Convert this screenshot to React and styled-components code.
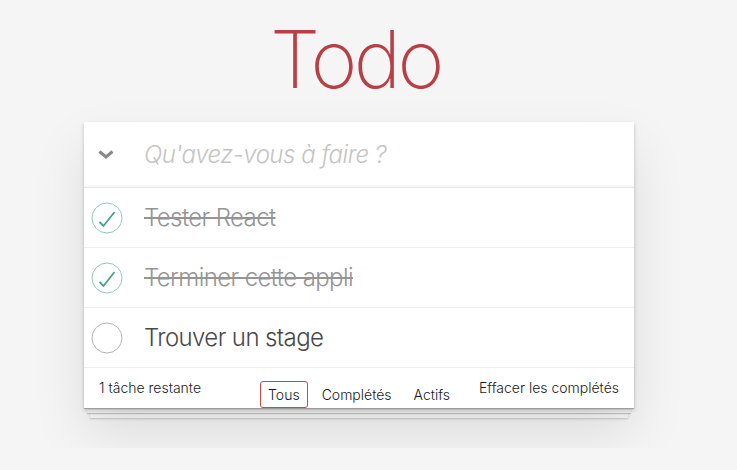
import React from "react";
import styled, { createGlobalStyle } from "styled-components";

const Global = createGlobalStyle`
  html, body { margin: 0; padding: 0; }
  body {
    background: #f5f5f5;
    font-family: Inter, "Helvetica Neue", "Liberation Sans", sans-serif;
    font-weight: 300;
    color: #111;
    -webkit-font-smoothing: antialiased;
  }
`;

const Page = styled.div`
  width: 550px;
  margin-left: 84px;
  padding-top: 19px;
  padding-bottom: 40px;
`;

const Title = styled.h1`
  margin: 0 0 23px;
  font-size: 80px;
  line-height: 80px;
  font-weight: 200;
  text-align: center;
  color: #b83f45;
  letter-spacing: -3.5px;
  text-indent: -7px;
`;

const Card = styled.section`
  background: #fff;
  position: relative;
  box-shadow: 0 2px 4px 0 rgba(0, 0, 0, 0.2), 0 25px 50px 0 rgba(0, 0, 0, 0.1);
`;

const Header = styled.div`
  display: flex;
  align-items: center;
  height: 65px;
  box-shadow: inset 0 -2px 1px rgba(0, 0, 0, 0.03);
`;

const ToggleAll = styled.div`
  width: 60px;
  flex: none;
  display: flex;
  align-items: center;
  padding-left: 14px;
  box-sizing: border-box;
`;

const NewTodo = styled.input`
  flex: 1;
  border: none;
  outline: none;
  background: transparent;
  font-family: inherit;
  font-size: 24px;
  font-weight: 300;
  font-style: italic;
  padding: 0 16px 0 0;
  color: #484848;
  letter-spacing: -0.5px;
  &::placeholder {
    color: #c4c4c4;
    font-style: italic;
    font-weight: 300;
  }
`;

const List = styled.ul`
  list-style: none;
  margin: 0;
  padding: 0;
  border-top: 1px solid #e6e6e6;
`;

const Item = styled.li`
  display: flex;
  align-items: center;
  height: 59px;
  border-bottom: 1px solid #ededed;
`;

const Toggle = styled.div`
  width: 60px;
  flex: none;
  display: flex;
  align-items: center;
  padding-left: 7px;
  box-sizing: border-box;
`;

const Label = styled.span`
  padding-top: 2px;
  font-size: 24px;
  line-height: 1.2;
  font-weight: 300;
  letter-spacing: -0.6px;
  color: ${(p) => (p.$done ? "#949494" : "#484848")};
  text-decoration: ${(p) => (p.$done ? "line-through" : "none")};
  text-decoration-thickness: 1.5px;
`;

const Footer = styled.footer`
  position: relative;
  display: grid;
  grid-template-columns: 1fr auto 1fr;
  align-items: start;
  height: 20px;
  padding: 10px 15px;
  font-size: 14px;
  font-weight: 300;
  color: #1a1a1a;
  &::before {
    content: "";
    position: absolute;
    left: 0;
    right: 0;
    bottom: 0;
    height: 50px;
    overflow: hidden;
    z-index: -1;
    box-shadow: 0 1px 1px rgba(0, 0, 0, 0.2), 0 8px 0 -3px #f6f6f6,
      0 9px 1px -3px rgba(0, 0, 0, 0.2), 0 16px 0 -6px #f6f6f6,
      0 17px 2px -6px rgba(0, 0, 0, 0.2);
  }
`;

const Count = styled.span`
  justify-self: start;
  line-height: 20px;
`;

const Filters = styled.ul`
  list-style: none;
  margin: 0;
  padding: 0;
  display: flex;
`;

const Filter = styled.li`
  margin: 3px;
  padding: 3px 7px;
  line-height: 19px;
  font-size: 14px;
  border: 1px solid ${(p) => (p.$selected ? "#ce4646" : "transparent")};
  border-radius: 3px;
`;

const Clear = styled.span`
  justify-self: end;
  line-height: 19px;
  font-size: 14px;
`;

const Chevron = () => (
  <svg width="16" height="9" viewBox="0 0 16 9">
    <polyline
      points="1.5,1.5 8,7 14.5,1.5"
      fill="none"
      stroke="#888"
      strokeWidth="3"
    />
  </svg>
);

const Check = ({ done }) => (
  <svg width="32" height="32" viewBox="0 0 32 32">
    <circle
      cx="16"
      cy="16"
      r="15"
      fill="none"
      stroke={done ? "#92c9bc" : "#b5b5b5"}
      strokeWidth="1"
    />
    {done && (
      <polyline
        points="8.5,20 12.5,24 23.5,10"
        fill="none"
        stroke="#47a08a"
        strokeWidth="1.8"
      />
    )}
  </svg>
);

const todos = [
  { text: "Tester React", done: true },
  { text: "Terminer cette appli", done: true },
  { text: "Trouver un stage", done: false },
];

export default function App() {
  return (
    <>
      <Global />
      <Page>
        <Title>Todo</Title>
        <Card>
          <Header>
            <ToggleAll>
              <Chevron />
            </ToggleAll>
            <NewTodo placeholder="Qu'avez-vous à faire ?" />
          </Header>
          <List>
            {todos.map((t) => (
              <Item key={t.text}>
                <Toggle>
                  <Check done={t.done} />
                </Toggle>
                <Label $done={t.done}>{t.text}</Label>
              </Item>
            ))}
          </List>
          <Footer>
            <Count>1 tâche restante</Count>
            <Filters>
              <Filter $selected>Tous</Filter>
              <Filter>Complétés</Filter>
              <Filter>Actifs</Filter>
            </Filters>
            <Clear>Effacer les complétés</Clear>
          </Footer>
        </Card>
      </Page>
    </>
  );
}
